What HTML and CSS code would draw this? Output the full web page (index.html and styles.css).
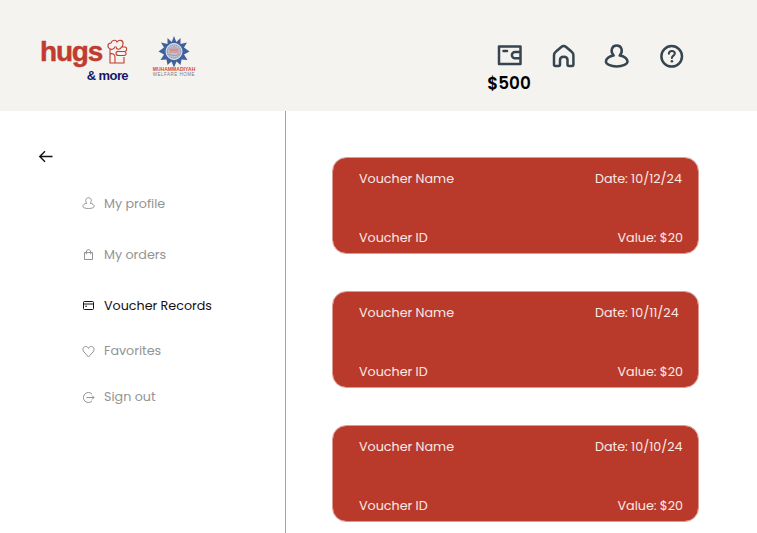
FILE: index.html
```html
<!DOCTYPE html>
<html lang="en">

<head>
    <meta charset="UTF-8">
    <meta name="viewport" content="width=device-width, initial-scale=1.0">
    <title>Voucher Records</title>
    <link rel="stylesheet" href="styles.css">
</head>

<body>
    <!-- Header -->
    <header class="header">
        <div class="logos">
            <div class="hugs-logo">
                <div class="hugs-top">
                    <span class="hugs-text">hugs</span>
                    <svg class="hugs-icon" width="21" height="26" viewBox="0 0 21 26">
                        <path d="M3.500 10C0 9 0 4 4 4C5 .5 9 .5 10 3C12 0 16.500 1 16 5C16 6.500 15.500 7.500 14.500 8M3 10C5 11 7.500 10 8 7.500M3 10V24H17V18M9 7.500C9 11 13 11 14.500 8M14.500 8H18.500C20.500 9 20 12.500 17.500 12.500H12M12 12.500C8 11.500 8 16.500 12 16.500H17C19.500 16.500 20 13.500 17.500 12.500M3 15C5 14 8 15 8 18V24" />
                    </svg>
                </div>
                <div class="more-text">&amp; more</div>
            </div>
            <div class="home-logo">
                <svg width="32" height="32" viewBox="0 0 32 32">
                    <path class="sun" d="M16 0L18.300 6L22.500 2L22.500 8L29 6.500L26 11.500L31.500 15.500L26 18.500L29.500 24L23.500 23.500L22.500 29L18.500 25.500L16 31.500L13.500 25.500L9.500 29L8.500 23.500L2.500 24L6 18.500L.5 15.500L6 11.500L3 6.500L9.500 8L9.500 2L13.700 6Z" />
                    <circle class="sun-ring" cx="16" cy="15.500" r="8" />
                    <circle class="sun-dots" cx="16" cy="15.500" r="6.500" />
                    <path class="sun-mark" d="M12 12V17M14 11V17M16 10V17M18 11V17M20 12V17M11 18C13 20 19 20 21 18M12 14H20" />
                </svg>
                <span class="home-name">MUHAMMADIYAH</span>
                <span class="home-sub">WELFARE HOME</span>
            </div>
        </div>

        <nav class="nav">
            <a class="nav-item wallet">
                <svg width="26" height="22" viewBox="0 0 26 22">
                    <path d="M3 2.500H24.500V20H3ZM24.500 8H19A3 3 0 0 0 19 14.200H24.500M7.500 7H11" />
                </svg>
                <span class="balance">$500</span>
            </a>
            <a class="nav-item">
                <svg width="24" height="24" viewBox="0 0 24 24">
                    <path d="M2 11.500C2 9.500 2.500 8.700 4 7.500L9 3.200C11.200 1.500 12.200 1.500 14.400 3.200L19.400 7.500C20.900 8.700 21.400 9.500 21.400 11.500V20.500C21.400 21.600 21 22 20 22H17C16 22 15.500 21.500 15.500 20.500V16C15.500 11.500 8 11.500 8 16V20.500C8 21.500 7.500 22 6.500 22H3.500C2.500 22 2 21.600 2 20.500Z" />
                </svg>
            </a>
            <a class="nav-item">
                <svg width="26" height="24" viewBox="0 0 26 24">
                    <path d="M8.700 11.500C5 7.500 6.500 1.500 11.700 1.500S18.400 7.500 14.700 11.500C19.500 12 22.500 15 22.500 17.500C22.500 20 18 22.500 11.700 22.500S.9 20 .9 17.500C.9 15 4 12 8.700 11.500Z" />
                </svg>
            </a>
            <a class="nav-item">
                <svg width="24" height="24" viewBox="0 0 24 24">
                    <circle cx="11.700" cy="12.300" r="10.300" />
                    <path class="thin" d="M8.900 9.700C8.900 6 14.800 6.300 14.800 9.500C14.800 11.700 11.900 11.700 11.900 14" />
                    <circle class="dot" cx="11.900" cy="17.300" r="1.300" />
                </svg>
            </a>
        </nav>
    </header>

    <div class="content">
        <!-- Sidebar -->
        <aside class="sidebar">
            <a class="back">
                <svg width="14" height="13" viewBox="0 0 14 13">
                    <path d="M13.500 6.500H1M6 1.200L.8 6.500L6 11.800" />
                </svg>
            </a>
            <ul class="menu">
                <li>
                    <svg width="13" height="13" viewBox="0 0 13 13">
                        <path d="M4.900 6.200C2.600 4.200 3.800 .7 6.500 .7S10.400 4.200 8.100 6.200C10.700 6.600 12.200 8 12.200 9.300C12.200 10.800 9.500 11.500 6.500 11.500S.8 10.800 .8 9.300C.8 8 2.300 6.600 4.900 6.200Z" />
                    </svg>
                    <span>My profile</span>
                </li>
                <li>
                    <svg width="13" height="13" viewBox="0 0 13 13">
                        <path d="M2.500 4.500H10.500V11.500H2.500ZM4.300 6.300V4C4.300.8 8.700.8 8.700 4V6.300" />
                    </svg>
                    <span>My orders</span>
                </li>
                <li class="active">
                    <svg width="13" height="13" viewBox="0 0 13 13">
                        <rect x="1.500" y="2.500" width="10" height="8" rx="1" />
                        <path d="M1.500 5H11.500M3.200 7.200H5" />
                    </svg>
                    <span>Voucher Records</span>
                </li>
                <li class="short">
                    <svg width="13" height="13" viewBox="0 0 13 13">
                        <path d="M6.500 12L2 7C-.5 4 1.800 1 4.200 1.500C5.500 1.700 6 2.500 6.500 3.500C7 2.500 7.500 1.700 8.800 1.500C11.200 1 13.500 4 11 7Z" />
                    </svg>
                    <span>Favorites</span>
                </li>
                <li class="short">
                    <svg width="13" height="13" viewBox="0 0 13 13">
                        <path d="M10 3A5 5 0 1 0 10 10M4.500 6.500H12M10 4.500L12 6.500L10 8.500" />
                    </svg>
                    <span>Sign out</span>
                </li>
            </ul>
        </aside>

        <!-- Voucher list -->
        <main class="vouchers">
            <div class="voucher">
                <div class="row"><span>Voucher Name</span><span class="date">Date: 10/12/24</span></div>
                <div class="row"><span>Voucher ID</span><span>Value: $20</span></div>
            </div>
            <div class="voucher">
                <div class="row"><span>Voucher Name</span><span class="date">Date: 10/11/24</span></div>
                <div class="row"><span>Voucher ID</span><span>Value: $20</span></div>
            </div>
            <div class="voucher">
                <div class="row"><span>Voucher Name</span><span class="date">Date: 10/10/24</span></div>
                <div class="row"><span>Voucher ID</span><span>Value: $20</span></div>
            </div>
        </main>
    </div>
</body>

</html>
```
FILE: styles.css
```css
* {
    box-sizing: border-box;
}

body {
    margin: 0;
    height: 533px;
    overflow: hidden;
    display: flex;
    flex-direction: column;
    background-color: #fff;
    font-family: Poppins, Inter, sans-serif;
    font-size: 12.7px;
}

svg {
    display: block;
    flex-shrink: 0;
    fill: none;
    stroke: currentColor;
}

/* Header */
.header {
    height: 111px;
    flex-shrink: 0;
    display: flex;
    justify-content: space-between;
    background-color: #f4f3ef;
    padding: 0 73px 0 40px;
}

.logos {
    display: flex;
    gap: 24px;
    padding-top: 36px;
}

.hugs-logo {
    width: 88px;
}

.hugs-top {
    display: flex;
    justify-content: space-between;
    height: 32px;
    color: #c13c2e;
}

.hugs-text {
    font-family: "Liberation Sans", Arial, sans-serif;
    font-size: 28px;
    line-height: 32px;
    font-weight: 700;
    letter-spacing: -1.2px;
    -webkit-text-stroke: 0.4px #c13c2e;
}

.hugs-icon {
    margin-top: 3px;
    stroke-width: 1.1;
}

.more-text {
    color: #14186b;
    font-family: "Liberation Sans", Arial, sans-serif;
    font-size: 13px;
    line-height: 15px;
    font-weight: 700;
    letter-spacing: -0.6px;
    text-align: right;
}

.home-logo {
    width: 44px;
    display: flex;
    flex-direction: column;
    align-items: center;
    white-space: nowrap;
}

.sun {
    fill: #41619b;
    stroke: none;
}

.sun-ring {
    fill: #b9c3d6;
    stroke: #e4e7eb;
}

.sun-dots {
    stroke: #7187b2;
    stroke-dasharray: 1 1;
}

.sun-mark {
    stroke: #d9796c;
    stroke-width: 0.8;
}

.home-name {
    margin-top: -1px;
    color: #cf4b3e;
    font-family: "Liberation Sans", Arial, sans-serif;
    font-size: 5px;
    line-height: 5px;
    font-weight: 700;
    letter-spacing: 0.05px;
}

.home-sub {
    color: #777b82;
    font-family: "Liberation Sans", Arial, sans-serif;
    font-size: 4.5px;
    line-height: 5px;
    letter-spacing: 0.5px;
}

.nav {
    display: flex;
    padding-top: 44px;
    color: #36454f;
}

.nav-item {
    height: 24px;
    margin-left: 28px;
}

.nav-item svg {
    stroke-width: 2.5;
    stroke-linecap: round;
    stroke-linejoin: round;
    overflow: visible;
}

.nav-item .thin {
    stroke-width: 2.1;
}

.nav-item .dot {
    fill: currentColor;
    stroke: none;
}

.nav-item:nth-child(2) {
    margin-left: 27px;
}

.nav-item:nth-child(3) {
    margin-left: 29px;
    margin-right: 1px;
}

.wallet {
    width: 44px;
    margin: 0 -6px 0 0;
    display: flex;
    flex-direction: column;
    align-items: center;
}

.balance {
    margin-top: 7px;
    color: #000;
    font-size: 16.8px;
    line-height: 20px;
    font-weight: 600;
}

/* Sidebar */
.content {
    flex: 1;
    min-height: 0;
    display: flex;
}

.sidebar {
    width: 286px;
    border-right: 1px solid #a3a3a3;
    padding: 39px 0 0 39px;
}

.back {
    color: #111;
}

.back svg {
    stroke-width: 1.4;
}

.menu {
    list-style: none;
    margin: 15px 0 0;
    padding: 0 0 0 43px;
}

.menu li {
    display: flex;
    align-items: center;
    gap: 9px;
    height: 51px;
    color: #939393;
    white-space: nowrap;
}

.menu .active {
    margin-bottom: -3px;
    color: #111;
}

.menu .short {
    height: 46px;
}

/* Vouchers */
.vouchers {
    padding: 46px 0 0 46px;
}

.voucher {
    width: 367px;
    height: 97px;
    margin-bottom: 37px;
    padding: 11px 15px 5px 26px;
    border-radius: 14px;
    border: 1px solid #dc9c95;
    background-color: #b93a2b;
    background-clip: padding-box;
    color: #fbe9e6;
    display: flex;
    flex-direction: column;
    justify-content: space-between;
}

.row {
    display: flex;
    justify-content: space-between;
    line-height: 20px;
}

.date {
    width: 88px;
    white-space: nowrap;
}
```
